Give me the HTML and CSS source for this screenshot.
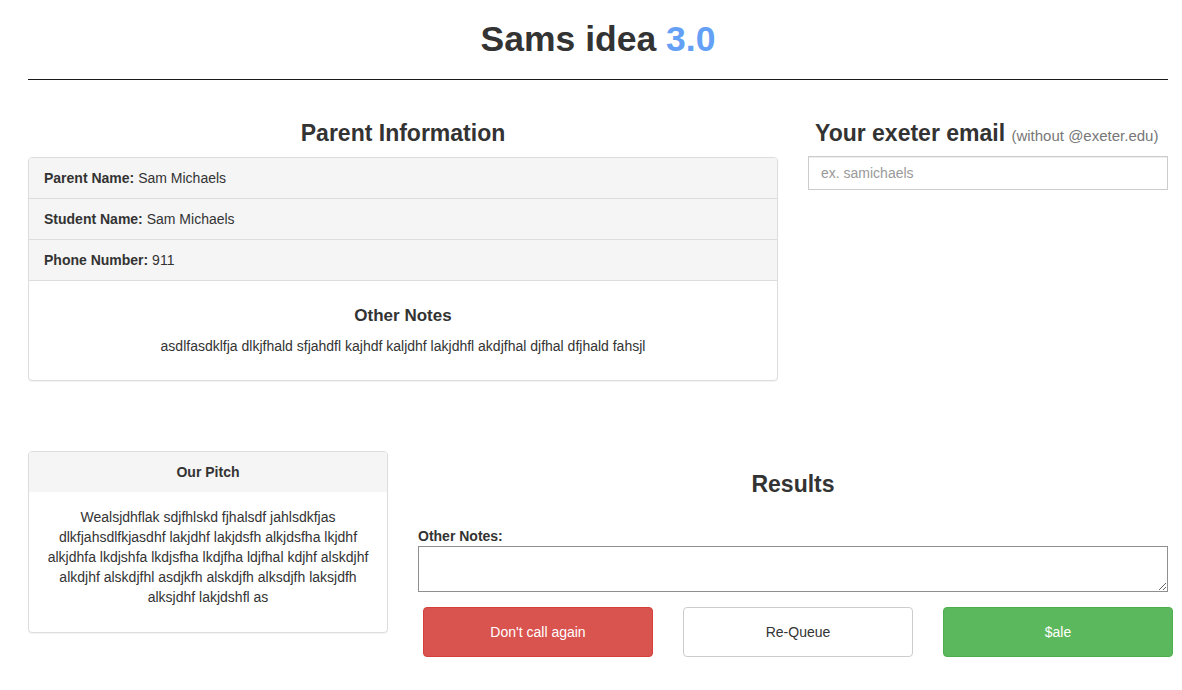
FILE: index.html
```html
<!DOCTYPE html>
<html>
<head>
<meta charset="utf-8">
<link rel="stylesheet" href="styles.css">
</head>
<body>
<div class="container">
  <h1 class="title">Sams idea <span class="version">3.0</span></h1>
  <hr class="rule">
  <div class="row top-row">
    <div class="col-wide">
      <h3 class="heading center">Parent Information</h3>
      <div class="panel">
        <div class="info-row"><b>Parent Name:</b> Sam Michaels</div>
        <div class="info-row"><b>Student Name:</b> Sam Michaels</div>
        <div class="info-row"><b>Phone Number:</b> 911</div>
        <div class="notes-body">
          <h4 class="subheading">Other Notes</h4>
          <p class="notes-text">asdlfasdklfja dlkjfhald sfjahdfl kajhdf kaljdhf lakjdhfl akdjfhal djfhal dfjhald fahsjl</p>
        </div>
      </div>
    </div>
    <div class="col-narrow">
      <h3 class="heading email-heading">Your exeter email <small class="hint">(without @exeter.edu)</small></h3>
      <input class="email-input" type="text" placeholder="ex. samichaels">
    </div>
  </div>
  <div class="row bottom-row">
    <div class="col-narrow">
      <div class="panel">
        <div class="pitch-head">Our Pitch</div>
        <div class="pitch-body">
          <p class="pitch-text">Wealsjdhflak sdjfhlskd fjhalsdf jahlsdkfjas dlkfjahsdlfkjasdhf lakjdhf lakjdsfh alkjdsfha lkjdhf alkjdhfa lkdjshfa lkdjsfha lkdjfha ldjfhal kdjhf alskdjhf alkdjhf alskdjfhl asdjkfh alskdjfh alksdjfh laksjdfh alksjdhf lakjdshfl as</p>
        </div>
      </div>
    </div>
    <div class="col-wide results">
      <h3 class="heading center results-heading">Results</h3>
      <label class="notes-label">Other Notes:</label>
      <textarea class="notes-area"></textarea>
      <div class="buttons">
        <button class="btn btn-danger">Don't call again</button>
        <button class="btn btn-default">Re-Queue</button>
        <button class="btn btn-success">$ale</button>
      </div>
    </div>
  </div>
</div>
</body>
</html>
```
FILE: styles.css
```css
* { box-sizing: border-box; }
html, body { margin: 0; padding: 0; background: #fff; }
body {
  font-family: "Liberation Sans", Arial, sans-serif;
  font-size: 14px;
  line-height: 20px;
  color: #333;
}
.container {
  width: 1140px;
  margin-left: 28px;
}
.title {
  margin: 19px 0 0;
  text-align: center;
  font-size: 35.5px;
  line-height: 40px;
  font-weight: bold;
  color: #333;
}
.version { color: #64a0f5; }
.rule {
  margin: 20px 0 0;
  border: 0;
  border-top: 1px solid #1a1a1a;
  height: 0;
}
.row {
  display: flex;
  gap: 30px;
  align-items: flex-start;
}
.top-row { margin-top: 40px; }
.bottom-row { margin-top: 70px; }
.col-wide { width: 750px; flex: none; }
.col-narrow { width: 360px; flex: none; }
.heading {
  margin: 0 0 11px;
  height: 26px;
  font-size: 23px;
  line-height: 26px;
  font-weight: bold;
  color: #333;
}
.center { text-align: center; }
.email-heading { padding-left: 7px; margin-bottom: 10px; }
.hint {
  font-size: 15px;
  line-height: 0;
  font-weight: normal;
  color: #777;
}
.panel {
  border: 1px solid #ddd;
  border-radius: 4px;
  box-shadow: 0 1px 1px rgba(0,0,0,0.05);
  background: #fff;
  overflow: hidden;
}
.info-row {
  background: #f5f5f5;
  padding: 10px 15px;
  border-bottom: 1px solid #ddd;
  line-height: 20px;
}
.notes-body {
  padding: 15px;
  text-align: center;
}
.subheading {
  margin: 10px 0 10px;
  font-size: 17px;
  line-height: 20px;
  font-weight: bold;
  color: #333;
}
.notes-text { margin: 0 0 9px; }
.email-input {
  display: block;
  width: 100%;
  height: 34px;
  padding: 6px 12px;
  font-family: inherit;
  font-size: 14px;
  color: #555;
  border: 1px solid #ccc;
  border-radius: 0;
  box-shadow: inset 0 1px 1px rgba(0,0,0,0.075);
}
.email-input::placeholder { color: #999; }
.pitch-head {
  background: #f5f5f5;
  padding: 10px 15px;
  text-align: center;
  font-weight: bold;
}
.pitch-body {
  padding: 15px;
  text-align: center;
}
.pitch-text { margin: 0 0 10px; }
.results-heading { margin: 20px 0 29px; }
.notes-label {
  display: block;
  font-weight: bold;
  line-height: 20px;
}
.notes-area {
  display: block;
  width: 750px;
  height: 46px;
  border: 1px solid #8f8f8f;
  margin: 0;
  font-family: inherit;
}
.buttons {
  display: flex;
  gap: 30px;
  margin-top: 15px;
  margin-left: 5px;
  width: 750px;
}
.btn {
  flex: none;
  width: 230px;
  height: 50px;
  border-radius: 4px;
  font-family: inherit;
  font-size: 14px;
  border: 1px solid transparent;
  cursor: pointer;
}
.btn-danger { background: #d9534f; border-color: #d43f3a; color: #fff; }
.btn-default { background: #fff; border-color: #ccc; color: #333; }
.btn-success { background: #5cb85c; border-color: #4cae4c; color: #fff; }
```
